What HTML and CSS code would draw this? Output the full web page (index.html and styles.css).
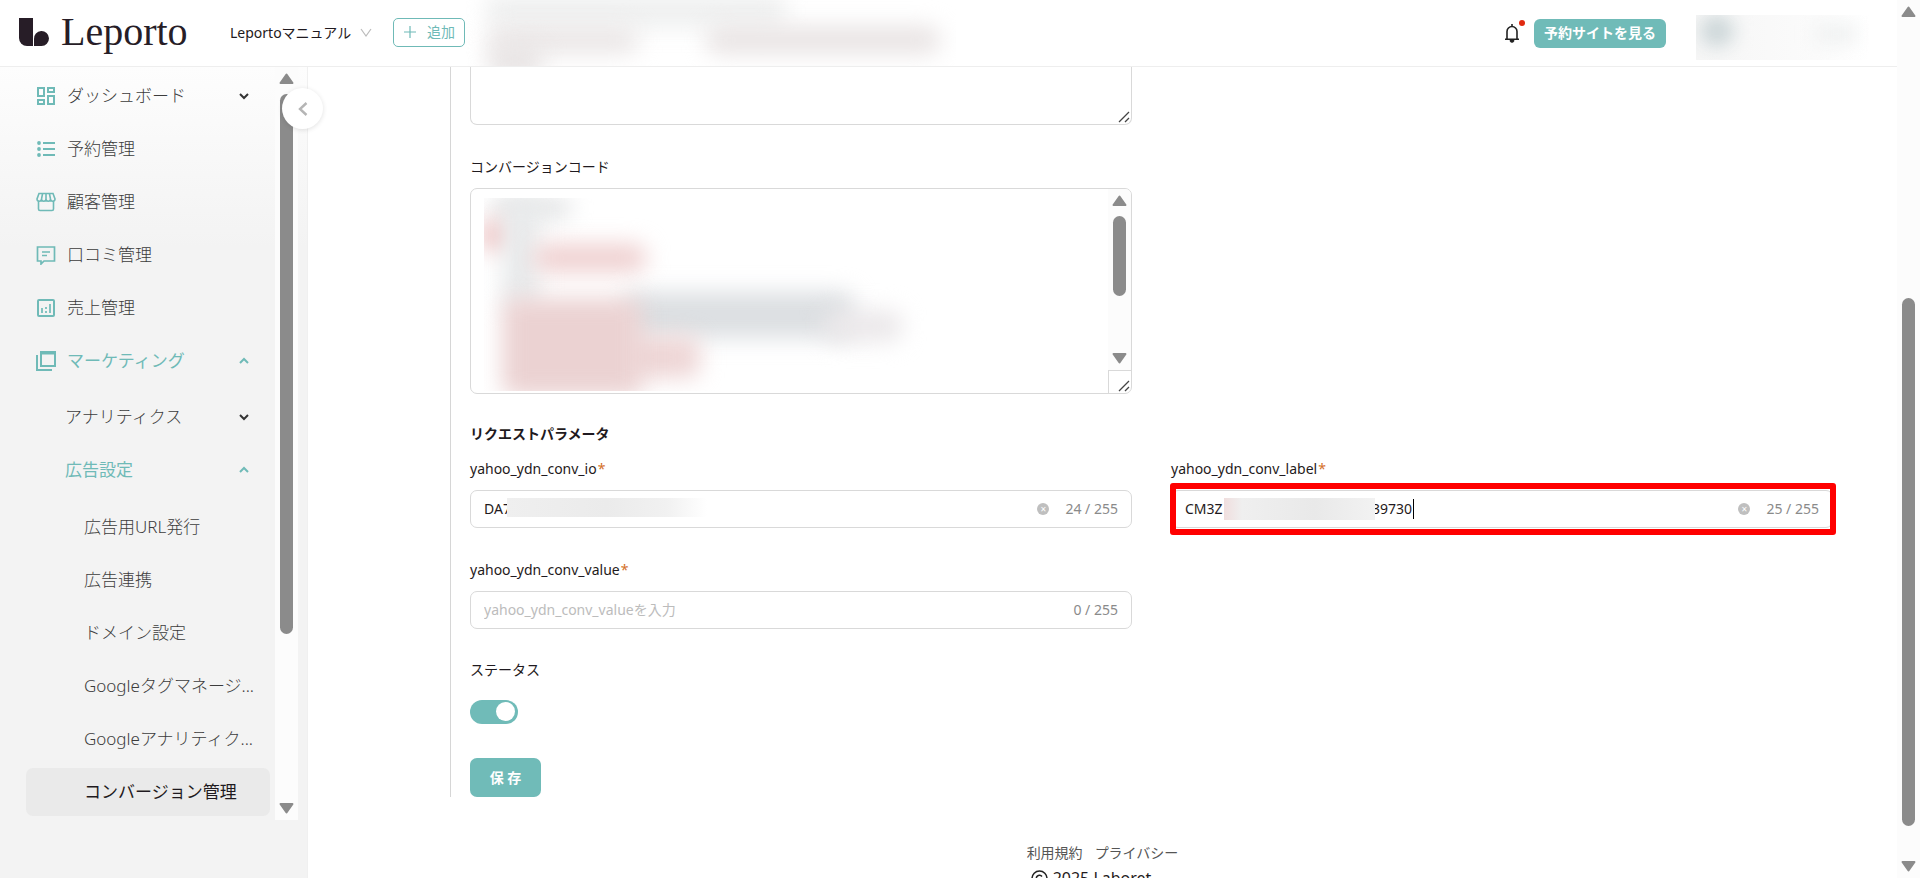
FILE: index.html
```html
<!DOCTYPE html>
<html lang="ja">
<head>
<meta charset="utf-8">
<title>Leporto</title>
<link rel="stylesheet" href="styles.css">
</head>
<body>
<div class="app">
  <header class="header">
    <a class="logo" href="#" aria-label="Leporto">
      <svg width="31" height="29" viewBox="0 0 31 29" fill="#271d27"><path d="M0 0h14v28H8a8 8 0 0 1-8-8z"/><path d="M15 28v-7a7.500 7.500 0 1 1 7.500 7z"/></svg>
      <span class="logo-word">Leporto</span>
    </a>
    <div class="shop">
      <select class="shop-select" aria-label="店舗"><option>Leportoマニュアル</option></select>
      <svg class="shop-arrow" width="12" height="10" viewBox="0 0 12 10" fill="none" stroke="#bbb" stroke-width="1.200"><path d="M1 1l5 7 5-7"/></svg>
    </div>
    <button class="add" type="button"><svg width="14" height="14" viewBox="0 0 14 14" stroke="currentColor" stroke-width="1.200"><path d="M7 1v12M1 7h12"/></svg>追加</button>
    <div class="smudge smudge-header" aria-hidden="true"><i class="h1"></i><i class="h2"></i><i class="h3"></i><i class="h4"></i></div>
    <div class="header-right">
      <button class="bell" type="button" aria-label="通知">
        <svg width="16" height="20" viewBox="0 0 16 20" fill="none" stroke="#222" stroke-width="1.600"><path d="M8 1v2M3 16V8.500a5 5 0 0 1 10 0V16M1 16.200h14"/><path d="M6 17.500a2 1.800 0 0 0 4 0z" fill="#222" stroke-width="1"/></svg>
        <span class="dot"></span>
      </button>
      <button class="site" type="button">予約サイトを見る</button>
      <div class="account" aria-hidden="true"><i></i><b></b></div>
    </div>
  </header>
  <div class="body">
    <aside class="sidebar">
      <nav class="nav">
        <a class="item" href="#"><svg class="ico" viewBox="0 0 20 20"><path d="M2 2h6v8H2zM12 2h6v4h-6zM12 10h6v8h-6zM2 14h6v4H2z"/></svg><span>ダッシュボード</span><svg class="chev" viewBox="0 0 10 8"><path d="M1 2l4 4 4-4"/></svg></a>
        <a class="item" href="#"><svg class="ico" viewBox="0 0 20 20"><path d="M7 4h12M7 10h12M7 16h12"/><g fill="#6fbab7" stroke="none"><circle cx="3" cy="4" r="1.900"/><circle cx="3" cy="10" r="1.900"/><circle cx="3" cy="16" r="1.900"/></g></svg><span>予約管理</span></a>
        <a class="item" href="#"><svg class="ico" viewBox="0 0 20 20"><path d="M2.500 9v8a1.500 1.500 0 0 0 1.500 1.500h12a1.500 1.500 0 0 0 1.500-1.500V9M3 1.500h14l2 5.500a2.200 2.200 0 0 1-4.500 0 2.200 2.200 0 0 1-4.500 0 2.200 2.200 0 0 1-4.500 0A2.200 2.200 0 0 1 1 7zM6.500 2l-1 5M10 2v5M13.500 2l1 5" stroke-width="1.600"/></svg><span>顧客管理</span></a>
        <a class="item" href="#"><svg class="ico" viewBox="0 0 20 20"><path d="M1.500 2h17v14H8l-3 3v-3H1.500zM6 7h8M6 10.500h5" stroke-width="1.700"/></svg><span>口コミ管理</span></a>
        <a class="item" href="#"><svg class="ico" viewBox="0 0 20 20"><rect x="2" y="2" width="16" height="16" rx="1"/><path d="M6 10v5M10 13v2M10 9v2M14 6v9" stroke-width="1.700"/></svg><span>売上管理</span></a>
        <a class="item open" href="#"><svg class="ico" viewBox="0 0 20 20"><path d="M5 1h14v14H5zM1 4v15h15"/><path d="M5 2.500h14"/></svg><span>マーケティング</span><svg class="chev" viewBox="0 0 10 8"><path d="M1 6l4-4 4 4"/></svg></a>
        <div class="group second">
          <a class="item" href="#"><span>アナリティクス</span><svg class="chev" viewBox="0 0 10 8"><path d="M1 2l4 4 4-4"/></svg></a>
          <a class="item open" href="#"><span>広告設定</span><svg class="chev" viewBox="0 0 10 8"><path d="M1 6l4-4 4 4"/></svg></a>
        </div>
        <div class="group third">
          <a class="item" href="#"><span>広告用URL発行</span></a>
          <a class="item" href="#"><span>広告連携</span></a>
          <a class="item" href="#"><span>ドメイン設定</span></a>
          <a class="item" href="#"><span>Googleタグマネージ...</span></a>
          <a class="item" href="#"><span>Googleアナリティク...</span></a>
          <a class="item current" href="#"><span>コンバージョン管理</span></a>
        </div>
      </nav>
      <div class="bar bar-nav" aria-hidden="true"><svg class="tri" viewBox="0 0 15 12"><path d="M7.500 1.500L13.500 10h-12z"/></svg><div class="thumb"></div><svg class="tri" viewBox="0 0 15 12"><path d="M7.500 10.500L13.500 2h-12z"/></svg></div>
      <button class="collapse" type="button" aria-label="メニューを閉じる"><svg width="10" height="16" viewBox="0 0 10 16" fill="none" stroke="#b5b5b5" stroke-width="2.400"><path d="M8.500 2L2 8l6.500 6"/></svg></button>
    </aside>
    <main class="main">
      <form class="form">
        <div class="row">
          <div class="area area-top"><textarea aria-label="タグ"></textarea><svg class="grip" viewBox="0 0 12 12"><path d="M1 11L11 1M7 11l4-4"/></svg></div>
        </div>
        <div class="row after-area">
          <div class="field">
            <label for="code">コンバージョンコード</label>
            <div class="area area-code">
              <textarea id="code"></textarea>
              <div class="smudge smudge-code" aria-hidden="true"><i class="c1"></i><i class="c2"></i><i class="c3"></i><i class="c4"></i><i class="c5"></i><i class="c6"></i><i class="c7"></i><i class="c8"></i></div>
              <div class="area-side" aria-hidden="true">
                <div class="bar bar-code"><svg class="tri" viewBox="0 0 15 12"><path d="M7.500 1.500L13.500 10h-12z"/></svg><div class="thumb"></div><svg class="tri" viewBox="0 0 15 12"><path d="M7.500 10.500L13.500 2h-12z"/></svg></div>
                <div class="corner"></div>
              </div>
              <svg class="grip" viewBox="0 0 12 12"><path d="M1 11L11 1M7 11l4-4"/></svg>
            </div>
          </div>
        </div>
        <h2 class="heading">リクエストパラメータ</h2>
        <div class="row">
          <div class="field">
            <label for="io">yahoo_ydn_conv_io<em>*</em></label>
            <div class="box"><input id="io" type="text" value="DA7"><button class="clear" type="button" aria-label="クリア">×</button><span class="count">24 / 255</span><div class="veil veil-io"></div></div>
          </div>
          <div class="field">
            <label for="lab">yahoo_ydn_conv_label<em>*</em></label>
            <div class="box"><input id="lab" type="text" value="CM3Z&emsp;&emsp;&emsp;&emsp;&emsp;&emsp;&emsp;&emsp;&emsp;&emsp;&ensp;&thinsp;39730"><button class="clear" type="button" aria-label="クリア">×</button><span class="count">25 / 255</span><div class="veil veil-label"></div><div class="caret"></div><div class="mark"></div></div>
          </div>
        </div>
        <div class="row after-field">
          <div class="field">
            <label for="val">yahoo_ydn_conv_value<em>*</em></label>
            <div class="box"><input id="val" type="text" placeholder="yahoo_ydn_conv_valueを入力"><span class="count">0 / 255</span></div>
          </div>
        </div>
        <div class="status"><label for="status">ステータス</label><input class="switch" id="status" type="checkbox" role="switch" checked></div>
        <button class="save" type="submit">保 存</button>
      </form>
      <footer class="footer">
        <div class="footer-inner">
          <div class="links"><a href="#">利用規約</a><a href="#">プライバシー</a></div>
          <div class="copy"><svg width="17" height="17" viewBox="0 0 17 17" fill="none" stroke="#222" stroke-width="1.500"><circle cx="8.500" cy="8.500" r="7.500"/><path d="M11 6.500a3.200 3.200 0 1 0 0 4"/></svg>2025 Laboret</div>
        </div>
      </footer>
    </main>
  </div>
</div>
<div class="bar bar-page" aria-hidden="true"><svg class="tri" viewBox="0 0 15 12"><path d="M7.500 1.500L13.500 10h-12z"/></svg><div class="thumb"></div><svg class="tri" viewBox="0 0 15 12"><path d="M7.500 10.500L13.500 2h-12z"/></svg></div>
</body>
</html>
```
FILE: styles.css
```css
* { box-sizing: border-box; }

body {
  margin: 0;
  height: 100vh;
  display: flex;
  overflow: hidden;
  background: #fff;
  color: #1f1a20;
  font: 14px/22px "Noto Sans", "Noto Sans CJK JP", sans-serif;
}

button, input, select, textarea { font: inherit; color: inherit; }
button { cursor: pointer; border: 0; padding: 0; }
a { color: inherit; text-decoration: none; }

.app { flex: 1; min-width: 0; display: flex; flex-direction: column; }

/* Header */
.header {
  position: relative;
  flex: none;
  height: 67px;
  display: flex;
  align-items: center;
  padding: 0 28px 0 19px;
  border-bottom: 1px solid #eee;
}
.logo { display: flex; align-items: center; gap: 11px; width: 211px; padding-bottom: 2px; }
.logo-word { font: 40px/50px "Liberation Serif", serif; color: #271d27; }
.shop { display: flex; align-items: center; gap: 8px; width: 163px; }
.shop-select { appearance: none; border: 0; padding: 0; background: none; font-size: 14px; }
.add {
  display: flex; align-items: center; justify-content: center; gap: 10px;
  width: 72px; height: 29px; margin-bottom: 2px;
  border: 1px solid #6fbab7; border-radius: 5px;
  background: #fff; color: #6fbab7;
}
.header-right { margin-left: auto; display: flex; align-items: center; }
.bell { position: relative; display: flex; margin-right: 14px; background: none; }
.dot { position: absolute; top: -3px; right: -5px; width: 6px; height: 6px; border-radius: 50%; background: #e02a10; }
.site {
  width: 132px; height: 29px; margin-right: 30px;
  border-radius: 6px; background: #70bbb8; color: #fff; font-weight: 700;
}
.account { position: relative; width: 173px; height: 45px; margin-top: 8px; overflow: hidden; background: linear-gradient(90deg, #f6f6f6, #fbfbfb 70%, #fff); }
.account i { position: absolute; left: 4px; top: 0; width: 34px; height: 32px; border-radius: 50%; background: #ccd6d8; filter: blur(9px); }
.account b { position: absolute; left: 120px; top: 10px; width: 40px; height: 18px; background: #eff1f1; filter: blur(9px); }

/* Blurred private content */
.smudge { position: absolute; overflow: hidden; pointer-events: none; }
.smudge i { position: absolute; border-radius: 12px; filter: blur(11px); }
.smudge-header { left: 466px; top: 0; width: 490px; height: 66px; }
.h1 { left: 20px; top: -6px; width: 300px; height: 34px; background: #eff0f0; }
.h2 { left: 22px; top: 26px; width: 150px; height: 28px; background: #ebe7e7; }
.h3 { left: 240px; top: 26px; width: 234px; height: 28px; background: #e9e4e4; }
.h4 { left: 22px; top: 44px; width: 54px; height: 34px; background: #e8e4e4; }

/* Frame */
.body { flex: 1; min-height: 0; display: flex; }
.sidebar {
  position: relative;
  flex: none;
  width: 308px;
  display: flex;
  align-items: flex-start;
  background: linear-gradient(#fdfdfd, #f3f3f3 180px);
  border-right: 1px solid #f0f0f0;
}
.nav { flex: 1; min-width: 0; display: flex; flex-direction: column; gap: 5px; padding: 5px 5px 0 26px; }
.item {
  display: flex; align-items: center; gap: 11px;
  height: 48px; padding: 0 21px 0 10px;
  border-radius: 7px;
  color: #3c3c3c; font-size: 17px; font-weight: 300; white-space: nowrap;
}
.item.open { color: #6fbab7; font-weight: 400; }
.item.current { background: #eaeaea; color: #1f1a20; font-weight: 400; }
.ico { width: 20px; height: 20px; fill: none; stroke: #6fbab7; stroke-width: 2; }
.chev { width: 10px; height: 8px; margin-left: auto; fill: none; stroke: #333; stroke-width: 2; }
.item.open .chev { stroke: #6fbab7; }
.group { display: flex; flex-direction: column; gap: 5px; }
.second { margin-top: 3px; }
.second .item { padding-left: 39px; }
.third { margin-top: 4px; }
.third .item { padding-left: 58px; padding-right: 0; }

.collapse {
  position: absolute; left: 282px; top: 21px;
  width: 41px; height: 41px;
  display: flex; align-items: center; justify-content: center;
  border-radius: 50%; background: #fff;
  box-shadow: 0 1px 5px rgba(0, 0, 0, .12);
}

/* Scroll bars */
.bar { flex: none; width: 23px; display: flex; flex-direction: column; align-items: center; padding: 6px 0; background: #fcfcfc; }
.tri { flex: none; width: 15px; height: 12px; fill: #8b8b8b; stroke: #8b8b8b; stroke-width: 2; stroke-linejoin: round; }
.thumb { width: 13px; border-radius: 7px; background: #8b8b8b; }
.bar-nav { height: 753px; max-height: 100%; margin-right: 9px; justify-content: space-between; }
.bar-nav .thumb { height: 540px; margin: 9px 0 auto; }
.bar-page { height: 100%; }
.bar-page .thumb { flex: 528; margin-top: 280px; margin-bottom: 34px; }

/* Form */
.main { flex: 1; min-width: 0; overflow: hidden; }
.form { margin: 0 64px 0 142px; border-left: 1px solid #d6d6d6; padding-left: 19px; }
.row { display: grid; grid-template-columns: 1fr 1fr; column-gap: 39px; }
.after-area, .after-field { margin-top: 31px; }
.field { display: flex; flex-direction: column; gap: 10px; min-width: 0; }
.field em { margin-left: 1px; color: #d4702a; font-style: normal; }
.area { position: relative; display: flex; }
.area textarea {
  flex: 1; display: block; min-width: 0; padding: 10px 14px;
  border: 1px solid #d9d9d9; border-radius: 7px;
  background: #fff; resize: none; overflow: hidden; outline: 0;
}
.area-top textarea { height: 58px; border-top: 0; border-radius: 0 0 7px 7px; }
.area-code textarea { height: 206px; }
.area-side { position: absolute; top: 1px; right: 1px; bottom: 1px; width: 23px; display: flex; flex-direction: column; }
.bar-code { flex: 1; justify-content: space-between; border-radius: 0 6px 0 0; }
.bar-code .thumb { height: 80px; margin: 9px 0 auto; }
.corner { height: 23px; border: 1px solid #d9d9d9; border-width: 1px 0 0 1px; }
.grip { position: absolute; right: 2px; bottom: 2px; width: 12px; height: 12px; fill: none; stroke: #444; stroke-width: 1.300; }
.smudge-code { left: 14px; top: 10px; width: 520px; height: 193px; }
.c1 { left: 8px; top: 0; width: 80px; height: 20px; background: #e2e3e4; }
.c2 { left: -4px; top: 22px; width: 34px; height: 30px; background: #efc3c3; }
.c3 { left: 18px; top: 0; width: 38px; height: 112px; background: #e8eaeb; }
.c4 { left: 50px; top: 46px; width: 112px; height: 28px; background: #efd0d0; }
.c5 { left: 140px; top: 94px; width: 230px; height: 46px; background: #dcdfe2; }
.c6 { left: 340px; top: 112px; width: 78px; height: 32px; background: #ebe8ea; }
.c7 { left: 140px; top: 138px; width: 76px; height: 42px; background: #eed6d6; }
.c8 { left: 18px; top: 100px; width: 140px; height: 98px; background: #ebd2d2; }

.heading { margin: 29px 0 13px; font-size: 14px; line-height: 22px; font-weight: 700; }
.box {
  position: relative;
  display: flex; align-items: center;
  height: 38px; padding: 0 13px;
  border: 1px solid #d9d9d9; border-radius: 7px;
}
.box input { flex: 1; min-width: 0; border: 0; padding: 0; background: none; outline: 0; }
.box input::placeholder { color: #bcbcbc; opacity: 1; }
.clear { width: 12px; height: 12px; margin-right: 16px; border-radius: 50%; background: #bfbfbf; color: #fff; font-size: 10px; line-height: 12px; }
.count { color: #8a8a8a; }
.veil { position: absolute; }
.veil-io { left: 36px; top: 7px; width: 200px; height: 19px; background: linear-gradient(90deg, #efefef, #ebebeb 50%, #f1f1f1 80%, #fff); }
.veil-label { left: 52px; top: 7px; width: 151px; height: 22px; background: linear-gradient(90deg, #f0dede, #efefef 12%, #e9e9e9 60%, #f2f2f2); }
.caret { position: absolute; left: 241px; top: 8px; width: 1px; height: 20px; background: #000; }
.mark { position: absolute; inset: -8px -4px -8px -2px; border: 6px solid #f00; border-radius: 3px; pointer-events: none; }

.status { display: flex; flex-direction: column; align-items: flex-start; gap: 19px; margin-top: 30px; }
.switch { appearance: none; width: 48px; height: 24px; margin: 0; padding: 2px 3px; display: flex; justify-content: flex-end; border-radius: 12px; background: #70bbb8; }
.switch::before { content: ""; width: 19px; height: 19px; border-radius: 50%; background: #fff; }
.save { width: 71px; height: 39px; margin-top: 34px; display: block; border-radius: 7px; background: #70bbb8; color: #fff; font-weight: 700; }

.footer { margin-top: 45px; display: flex; justify-content: center; }
.links { display: flex; gap: 12px; color: #555; }
.copy { display: flex; align-items: center; gap: 5px; padding-left: 4px; font-size: 16px; line-height: 28px; }
```
